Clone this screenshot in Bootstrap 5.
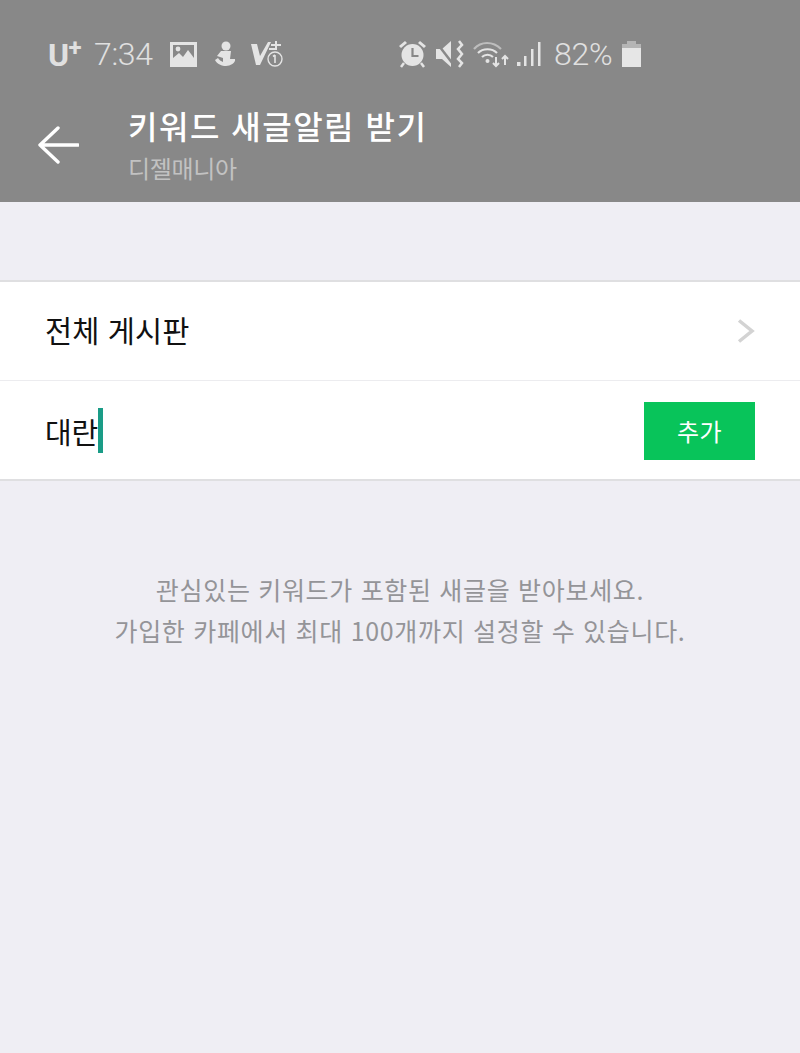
<!DOCTYPE html>
<html lang="ko">
<head>
<meta charset="utf-8">
<title>키워드 새글알림 받기</title>
<link href="https://cdn.jsdelivr.net/npm/bootstrap@5.3.0/dist/css/bootstrap.min.css" rel="stylesheet">
<style>
html,body{height:100%}
body{background:#efeef4;font-family:"Noto Sans CJK KR","Noto Sans",sans-serif;overflow:hidden}
.top-head{background:#888;height:202px;color:#fff}
.stat-bar{height:44px;margin-top:32px;padding-left:48px;color:#e0e0e0}
.stat-bar svg{display:block;flex:none}
.carrier{font:700 32px/1 "Roboto",sans-serif;width:36px;letter-spacing:-.5px;transform:translateY(1px);white-space:nowrap}
.carrier sup{font-size:24px;position:relative;top:-.42em;vertical-align:baseline;line-height:0}
.clock{font:300 32px/1 "Roboto",sans-serif;margin-left:10px;width:60px;letter-spacing:-.3px}
.pct{font:300 32px/1 "Roboto",sans-serif;letter-spacing:-.3px}
.title-row{padding-left:38px;padding-top:12px;flex:1}
.title-text{margin-left:49px}
.title-main{font-size:32px;font-weight:500;line-height:40px;letter-spacing:1.5px;margin-top:-3px}
.title-sub{font-size:24px;line-height:30px;color:#c2c2c2;margin-top:8px;letter-spacing:-.3px}
.form-box{margin-top:78px;background:#fff;border-top:2px solid #dfdfe1;border-bottom:2px solid #dfdfe1}
.form-line{height:98px;padding:0 45px}
.form-line+.form-line{height:99px;border-top:1px solid #ececef}
.line-label{font-size:29.500px;color:#111;letter-spacing:.1px;line-height:1;margin-top:-2px}
.kw-text{font-size:29px;color:#111;line-height:1;letter-spacing:-.2px;margin-top:2px}
.kw-caret{width:5px;height:45px;background:#1a9c87;display:block}
.add-btn{width:111px;height:58px;background:#08c45a;color:#fff;border:0;border-radius:0;font-size:24px;line-height:1;padding:0;letter-spacing:.5px;margin-top:2px}
.add-btn:hover{background:#08c45a;color:#fff}
.hint-text{margin-top:88px;font-size:25px;line-height:41px;color:#949498;letter-spacing:.68px;font-weight:400}
</style>
</head>
<body>
<header class="top-head d-flex flex-column">
  <div class="stat-bar d-flex align-items-center">
    <span class="carrier">U<sup>+</sup></span>
    <span class="clock">7:34</span>
    <svg class="ms-3" width="27" height="25" viewBox="0 0 27 25"><path fill-rule="evenodd" fill="#e4e4e4" d="M0 0h27v25H0zM3 3v13l6-5 4 4 5-7 6 8V3z"/><circle cx="8" cy="7" r="2.400" fill="#e4e4e4"/></svg>
    <svg style="margin-left:16px" width="24" height="26" viewBox="0 0 24 26" fill="#e4e4e4"><circle cx="13" cy="5" r="4.500"/><path d="M8 10h10l-1 8h5c1 4-5 7-9 7-4 0-9-2-11-6l3-2c1 2 3 3 5 4v-4l-6-2z"/></svg>
    <svg style="margin-left:13px" width="34" height="28" viewBox="0 0 34 28"><path fill="#e4e4e4" d="M1 4h6l3 12L18 2h3L10 25H6z"/><path stroke="#e4e4e4" stroke-width="2" fill="none" d="M26 1v7M21 5h10M19 9h8"/><circle cx="25" cy="19" r="7" stroke="#e4e4e4" stroke-width="1.400" fill="none"/><path stroke="#e4e4e4" stroke-width="1.600" d="M25 15v8M23 16.500l2-1.500"/></svg>
    <svg style="margin-left:114px" width="29" height="28" viewBox="0 0 29 28"><circle cx="14.500" cy="15" r="11" fill="#e4e4e4"/><path d="M14.500 8v8h6" stroke="#888" stroke-width="2.200" fill="none"/><path d="M1 6l6-5 2 2-6 5zM28 6l-6-5-2 2 6 5z" fill="#e4e4e4"/><path d="M6 23l-3 4M23 23l3 4" stroke="#e4e4e4" stroke-width="2.500"/></svg>
    <svg style="margin-left:9px" width="28" height="28" viewBox="0 0 28 28"><path fill="#e4e4e4" d="M0 9h6l9-8v26l-9-8H0z"/><path d="M0 2l17 22" stroke="#888" stroke-width="2.500"/><path d="M23 1l3 4-4 4 4 5-4 5 4 4-3 4" stroke="#e4e4e4" stroke-width="2.500" fill="none"/></svg>
    <svg style="margin-left:9px" width="36" height="28" viewBox="0 0 36 28" fill="none"><path d="M1 9C8 1 20 1 28 9" stroke="#bdbdbd" stroke-width="2.200"/><path d="M5 13c5-5 14-5 19 0M9 17c3-3 8-3 11 0" stroke="#e4e4e4" stroke-width="2.200"/><circle cx="14.500" cy="21" r="2" fill="#e4e4e4"/><path d="M23 17v9M20 23l3 3 3-3M32 25v-9M29 19l3-3 3 3" stroke="#e4e4e4" stroke-width="2"/></svg>
    <svg style="margin-left:8px" width="25" height="26" viewBox="0 0 25 26" fill="#e4e4e4"><rect x="0" y="21" width="3.500" height="4"/><rect x="7" y="15" width="2.500" height="10"/><rect x="14" y="8" width="2.500" height="17"/><rect x="21" y="1" width="2.500" height="24"/></svg>
    <span class="pct" style="margin-left:12px">82%</span>
    <svg style="margin-left:10px" width="19" height="26" viewBox="0 0 19 26"><path fill="#b5b5b5" d="M5 0h9v3H5zM0 3h19v5H0z"/><rect y="7" width="19" height="19" fill="#e6e6e6"/></svg>
  </div>
  <div class="title-row d-flex align-items-center">
    <svg width="41" height="38" viewBox="0 0 41 38" fill="none" stroke="#fff" stroke-width="3.400" stroke-linecap="round" stroke-linejoin="round"><path d="M2 19h38M20 2L2 19l18 17"/></svg>
    <div class="title-text">
      <div class="title-main">키워드 새글알림 받기</div>
      <div class="title-sub">디젤매니아</div>
    </div>
  </div>
</header>
<main>
  <section class="form-box">
    <div class="form-line d-flex align-items-center justify-content-between">
      <span class="line-label">전체 게시판</span>
      <svg width="18" height="24" viewBox="0 0 18 24" fill="none" stroke="#d3d3d3" stroke-width="3.500"><path d="M2 1.500L15 12 2 22.500"/></svg>
    </div>
    <div class="form-line d-flex align-items-center justify-content-between">
      <span class="d-flex align-items-center"><span class="kw-text">대란</span><i class="kw-caret"></i></span>
      <button type="button" class="btn add-btn">추가</button>
    </div>
  </section>
  <p class="hint-text text-center mb-0">관심있는 키워드가 포함된 새글을 받아보세요.<br>가입한 카페에서 최대 100개까지 설정할 수 있습니다.</p>
</main>
<script src="https://cdn.jsdelivr.net/npm/bootstrap@5.3.0/dist/js/bootstrap.bundle.min.js"></script>
</body>
</html>
